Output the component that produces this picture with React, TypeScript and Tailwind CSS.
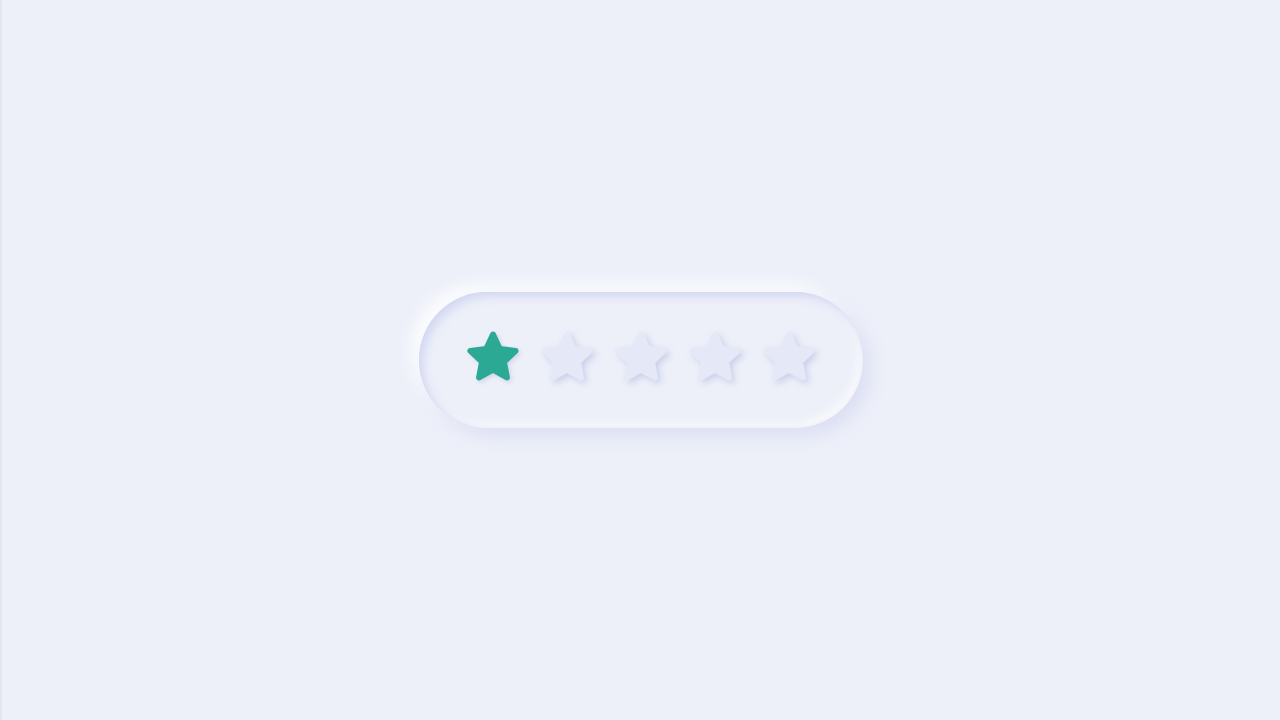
import React from "react";

const STAR =
  "M12 3 L14.7 8.78 L21.03 9.56 L16.37 13.92 L17.58 20.19 L12 17.1 L6.42 20.19 L7.63 13.92 L2.97 9.56 L9.3 8.78 Z";

function Star({ filled }: { filled: boolean }) {
  const c = filled ? "#2ca994" : "#e5e8f6";
  return (
    <svg
      width="60"
      height="60"
      viewBox="0 0 24 24"
      className={
        filled
          ? "drop-shadow-[2px_2px_2px_rgba(160,170,210,0.35)]"
          : "drop-shadow-[3px_3px_3px_rgba(175,182,222,0.55)]"
      }
    >
      <path d={STAR} fill={c} stroke={c} strokeWidth="2.4" strokeLinejoin="round" />
    </svg>
  );
}

export default function App() {
  return (
    <div className="w-[1280px] h-[720px] bg-[#edf0f9] border-l-2 border-[#e3e6ee] flex items-center justify-center">
      <div className="w-[444px] h-[136px] rounded-full bg-[#edf0f9] flex items-center justify-center gap-[14px] pb-[6px] shadow-[inset_5px_5px_9px_rgba(205,210,240,0.75),inset_-5px_-5px_9px_rgba(255,255,255,0.6),inset_0_0_3px_rgba(205,210,238,0.7),8px_8px_16px_rgba(212,217,240,0.7),-8px_-8px_16px_rgba(255,255,255,0.85)]">
        <Star filled />
        <Star filled={false} />
        <Star filled={false} />
        <Star filled={false} />
        <Star filled={false} />
      </div>
    </div>
  );
}
